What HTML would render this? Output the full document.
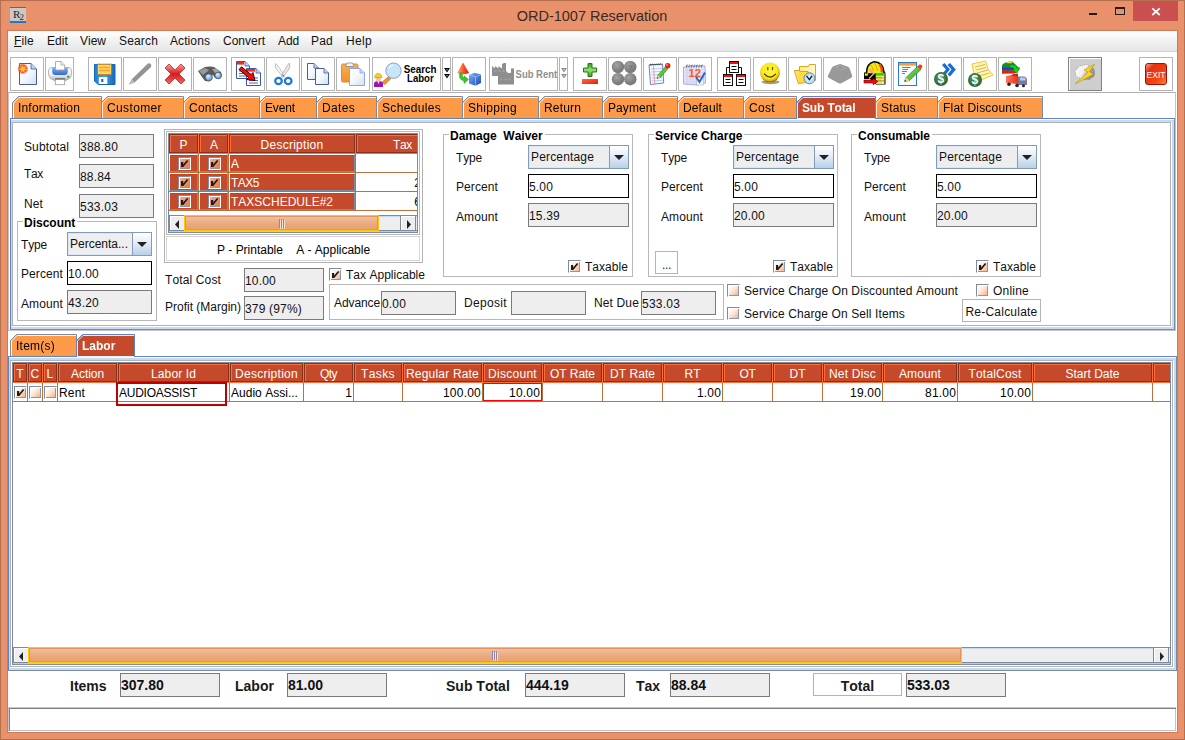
<!DOCTYPE html>
<html lang="en"><head><meta charset="utf-8"><title>ORD-1007 Reservation</title>
<style>
*{box-sizing:border-box;margin:0;padding:0}
html,body{width:1185px;height:740px;overflow:hidden}
body{background:#e8916b;font-family:"Liberation Sans",Arial,sans-serif;font-size:12px;color:#111;position:relative;letter-spacing:.15px;font-kerning:none}
.a{position:absolute}
.t{position:absolute;white-space:nowrap;line-height:14px;height:14px}
.b{font-weight:bold;letter-spacing:0}
.tf{position:absolute;border:1px solid #7a7a7a;background:#eee;white-space:nowrap;overflow:hidden;line-height:14px;padding:5px 0 0 0;height:24px}
.tfw{background:#fff;border-color:#000}
.grp{position:absolute;border:1px solid #b8b8b8}
.grp>b{letter-spacing:0;position:absolute;left:5px;top:-6px;background:#fff;padding:0 2px 0 1px;line-height:14px;height:14px;white-space:nowrap;color:#000}
.cb{position:absolute;width:13px;height:13px;border:1px solid #fff;border-top-color:#7b8ca1;border-left-color:#7b8ca1;background:linear-gradient(135deg,#fff 10%,#fde9dc 45%,#f2a87c 100%);box-shadow:inset 1px 1px 0 0 #fff,inset -1px -1px 0 0 #8a98aa}
.cbs{background:linear-gradient(135deg,#e9b0a4 10%,#ea9068 50%,#f07c2a 100%)}
.cb svg{position:absolute;left:1px;top:1px}
.combo{position:absolute;border:1px solid #7f9db9;background:#eee;line-height:14px;padding:4px 0 0 2px;white-space:nowrap;overflow:hidden;height:24px;box-shadow:inset 0 0 0 1px #dbe6f4}
.combo i{position:absolute;right:0;top:0;bottom:0;width:19px;border-left:1px solid #7f9db9;background:linear-gradient(#fff,#e4edf8 45%,#b9cfe9)}
.combo i:after{content:"";position:absolute;left:4px;top:9px;border:5px solid transparent;border-top-color:#222;border-bottom:0}
.tb{position:absolute;top:57px;height:34px;border:1px solid #b4b4b4;background:#fff}
.btn{position:absolute;border:1px solid #b4b4b4;background:#fff;text-align:center;white-space:nowrap;line-height:14px}
.th{position:absolute;height:19px;background:#c44a2b;border:1px solid #8a3219;box-shadow:inset 1px 1px 0 0 #ff6c3c;color:#fff;text-align:center;line-height:14px;padding-top:3px;white-space:nowrap;overflow:hidden}
.td{position:absolute;height:19px;line-height:14px;padding-top:3px;white-space:nowrap;overflow:hidden;color:#000}
.pane{position:absolute;background:#fff}
.pane>i{position:absolute;display:block}
</style></head>
<body>
<div class="a" style="left:0;top:0;width:1185px;height:740px;border:1px solid #b5714f"></div>
<div class="a" style="left:7px;top:30px;width:1171px;height:703px;border:1px solid #cf7a55;background:#fff"></div>
<div class="a" style="left:10px;top:7px;width:16px;height:16px;background:#c9c9c9;border-top:1px solid #2f73b8;border-bottom:2px solid #2f73b8;font-family:'Liberation Serif',serif;font-size:11px;line-height:12px;color:#222;text-align:center;letter-spacing:-1px">R<span style="font-size:9px;position:relative;top:2px">2</span></div>
<div class="t" style="left:507px;top:7px;width:170px;text-align:center;font-size:15.5px;letter-spacing:0;line-height:18px;height:18px;color:#3a2a22;transform:scaleX(.935)">ORD-1007 Reservation</div>
<div class="a" style="left:1089px;top:13px;width:8px;height:2px;background:#1e1e1e"></div>
<div class="a" style="left:1115px;top:7px;width:10px;height:8px;border:1px solid #1e1e1e;border-top-width:2px"></div>
<div class="a" style="left:1133px;top:1px;width:45px;height:20px;background:#c9504f"></div>
<svg class="a" style="left:1150px;top:6px" width="12" height="11" viewBox="0 0 12 11"><path d="M2.300 2.300 L9.700 9 M9.700 2.300 L2.300 9" stroke="#fff" stroke-width="1.700" fill="none"/></svg>
<div class="a" style="left:8px;top:31px;width:1169px;height:21px;background:linear-gradient(#fff,#f4f4f4 40%,#e6e6e6);border-bottom:1px solid #d0d0d0"></div>
<div class="t" style="left:14px;top:34px"><u>F</u>ile</div><div class="t" style="left:47px;top:34px;letter-spacing:0.08px">Edit</div><div class="t" style="left:80px;top:34px;letter-spacing:-0.00px">View</div><div class="t" style="left:119px;top:34px;letter-spacing:0.16px">Search</div><div class="t" style="left:170px;top:34px;letter-spacing:0.09px">Actions</div><div class="t" style="left:223px;top:34px;letter-spacing:-0.00px">Convert</div><div class="t" style="left:278px;top:34px;letter-spacing:-0.12px">Add</div><div class="t" style="left:311px;top:34px;letter-spacing:0.22px">Pad</div><div class="t" style="left:346px;top:34px;letter-spacing:0.33px">Help</div>
<div class="tb" style="left:10px;width:34px"></div><div class="tb" style="left:45px;width:29px"></div><div class="tb" style="left:88px;width:34px"></div><div class="tb" style="left:123px;width:34px"></div><div class="tb" style="left:158px;width:34px"></div><div class="tb" style="left:193px;width:34px"></div><div class="tb" style="left:231px;width:34px"></div><div class="tb" style="left:266px;width:34px"></div><div class="tb" style="left:301px;width:34px"></div><div class="tb" style="left:336px;width:34px"></div><div class="tb" style="left:372px;width:69px"></div><div class="tb" style="left:442px;width:9px"></div><div class="tb" style="left:452px;width:34px"></div><div class="tb" style="left:489px;width:69px"></div><div class="tb" style="left:559px;width:9px"></div><div class="tb" style="left:573px;width:34px"></div><div class="tb" style="left:608px;width:34px"></div><div class="tb" style="left:643px;width:34px"></div><div class="tb" style="left:678px;width:34px"></div><div class="tb" style="left:717px;width:34px"></div><div class="tb" style="left:753px;width:34px"></div><div class="tb" style="left:788px;width:34px"></div><div class="tb" style="left:823px;width:34px"></div><div class="tb" style="left:858px;width:34px"></div><div class="tb" style="left:893px;width:34px"></div><div class="tb" style="left:928px;width:34px"></div><div class="tb" style="left:963px;width:34px"></div><div class="tb" style="left:998px;width:34px"></div><div class="tb" style="left:1068px;width:34px;background:#cecece;border-color:#828282"></div><div class="tb" style="left:1139px;width:34px"></div>
<div class="a" style="left:8px;top:92px;width:1168px;height:239px;border:1px solid #c4c4c4;border-top-color:#b0b0b0"></div>
<div class="pane" style="left:10px;top:118px;width:1165px;height:212px"><i style="left:0;top:0;width:1165px;height:1px;background:#5f83c4"></i><i style="left:1px;top:2px;width:1163px;height:2px;background:#c5dbf3"></i><i style="left:2px;top:4px;width:1159px;height:1px;background:#b2b2b2"></i><i style="left:0;top:0;width:1px;height:212px;background:#5f83c4"></i><i style="left:1px;top:2px;width:1px;height:209px;background:#c5dbf3"></i><i style="left:2px;top:4px;width:1px;height:204px;background:#b2b2b2"></i><i style="right:0;top:0;width:1px;height:212px;background:#7b8ca1"></i><i style="right:1px;top:2px;width:2px;height:209px;background:#c5dbf3"></i><i style="right:4px;top:4px;width:1px;height:204px;background:#b2b2b2"></i><i style="left:0;bottom:0;width:1165px;height:1px;background:#7b8ca1"></i><i style="left:1px;bottom:1px;width:1163px;height:2px;background:#c5dbf3"></i><i style="left:2px;bottom:4px;width:1159px;height:1px;background:#b2b2b2"></i></div>
<svg class="a" style="left:12px;top:96px" width="90" height="22" viewBox="0 0 90 22"><path d="M0.5 22 V6.5 L6.5 0.5 H89.5 V22" fill="#fd9a47" stroke="#7b8ca1"/><path d="M1.5 22 V7 L7 1.5 H89" fill="none" stroke="#fff" stroke-opacity=".85"/></svg><div class="t" style="left:18px;top:101px;color:#000;letter-spacing:0.18px;will-change:transform">Information</div>
<svg class="a" style="left:101px;top:96px" width="83" height="22" viewBox="0 0 83 22"><path d="M0.5 22 V6.5 L6.5 0.5 H82.5 V22" fill="#fd9a47" stroke="#7b8ca1"/><path d="M1.5 22 V7 L7 1.5 H82" fill="none" stroke="#fff" stroke-opacity=".85"/></svg><div class="t" style="left:107px;top:101px;color:#000;letter-spacing:0.37px;will-change:transform">Customer</div>
<svg class="a" style="left:183px;top:96px" width="77" height="22" viewBox="0 0 77 22"><path d="M0.5 22 V6.5 L6.5 0.5 H76.5 V22" fill="#fd9a47" stroke="#7b8ca1"/><path d="M1.5 22 V7 L7 1.5 H76" fill="none" stroke="#fff" stroke-opacity=".85"/></svg><div class="t" style="left:189px;top:101px;color:#000;letter-spacing:0.21px;will-change:transform">Contacts</div>
<svg class="a" style="left:259px;top:96px" width="58" height="22" viewBox="0 0 58 22"><path d="M0.5 22 V6.5 L6.5 0.5 H57.5 V22" fill="#fd9a47" stroke="#7b8ca1"/><path d="M1.5 22 V7 L7 1.5 H57" fill="none" stroke="#fff" stroke-opacity=".85"/></svg><div class="t" style="left:265px;top:101px;color:#000;letter-spacing:-0.14px;will-change:transform">Event</div>
<svg class="a" style="left:316px;top:96px" width="61" height="22" viewBox="0 0 61 22"><path d="M0.5 22 V6.5 L6.5 0.5 H60.5 V22" fill="#fd9a47" stroke="#7b8ca1"/><path d="M1.5 22 V7 L7 1.5 H60" fill="none" stroke="#fff" stroke-opacity=".85"/></svg><div class="t" style="left:322px;top:101px;color:#000;letter-spacing:0.33px;will-change:transform">Dates</div>
<svg class="a" style="left:376px;top:96px" width="87" height="22" viewBox="0 0 87 22"><path d="M0.5 22 V6.5 L6.5 0.5 H86.5 V22" fill="#fd9a47" stroke="#7b8ca1"/><path d="M1.5 22 V7 L7 1.5 H86" fill="none" stroke="#fff" stroke-opacity=".85"/></svg><div class="t" style="left:382px;top:101px;color:#000;letter-spacing:0.33px;will-change:transform">Schedules</div>
<svg class="a" style="left:462px;top:96px" width="77" height="22" viewBox="0 0 77 22"><path d="M0.5 22 V6.5 L6.5 0.5 H76.5 V22" fill="#fd9a47" stroke="#7b8ca1"/><path d="M1.5 22 V7 L7 1.5 H76" fill="none" stroke="#fff" stroke-opacity=".85"/></svg><div class="t" style="left:468px;top:101px;color:#000;letter-spacing:0.29px;will-change:transform">Shipping</div>
<svg class="a" style="left:538px;top:96px" width="65" height="22" viewBox="0 0 65 22"><path d="M0.5 22 V6.5 L6.5 0.5 H64.5 V22" fill="#fd9a47" stroke="#7b8ca1"/><path d="M1.5 22 V7 L7 1.5 H64" fill="none" stroke="#fff" stroke-opacity=".85"/></svg><div class="t" style="left:544px;top:101px;color:#000;letter-spacing:0.16px;will-change:transform">Return</div>
<svg class="a" style="left:602px;top:96px" width="76" height="22" viewBox="0 0 76 22"><path d="M0.5 22 V6.5 L6.5 0.5 H75.5 V22" fill="#fd9a47" stroke="#7b8ca1"/><path d="M1.5 22 V7 L7 1.5 H75" fill="none" stroke="#fff" stroke-opacity=".85"/></svg><div class="t" style="left:608px;top:101px;color:#000;letter-spacing:0.09px;will-change:transform">Payment</div>
<svg class="a" style="left:677px;top:96px" width="67" height="22" viewBox="0 0 67 22"><path d="M0.5 22 V6.5 L6.5 0.5 H66.5 V22" fill="#fd9a47" stroke="#7b8ca1"/><path d="M1.5 22 V7 L7 1.5 H66" fill="none" stroke="#fff" stroke-opacity=".85"/></svg><div class="t" style="left:683px;top:101px;color:#000;letter-spacing:0.14px;will-change:transform">Default</div>
<svg class="a" style="left:743px;top:96px" width="54" height="22" viewBox="0 0 54 22"><path d="M0.5 22 V6.5 L6.5 0.5 H53.5 V22" fill="#fd9a47" stroke="#7b8ca1"/><path d="M1.5 22 V7 L7 1.5 H53" fill="none" stroke="#fff" stroke-opacity=".85"/></svg><div class="t" style="left:749px;top:101px;color:#000;letter-spacing:0.33px;will-change:transform">Cost</div>
<svg class="a" style="left:875px;top:96px" width="63" height="22" viewBox="0 0 63 22"><path d="M0.5 22 V6.5 L6.5 0.5 H62.5 V22" fill="#fd9a47" stroke="#7b8ca1"/><path d="M1.5 22 V7 L7 1.5 H62" fill="none" stroke="#fff" stroke-opacity=".85"/></svg><div class="t" style="left:881px;top:101px;color:#000;letter-spacing:0.16px;will-change:transform">Status</div>
<svg class="a" style="left:937px;top:96px" width="106" height="22" viewBox="0 0 106 22"><path d="M0.5 22 V6.5 L6.5 0.5 H105.5 V22" fill="#fd9a47" stroke="#7b8ca1"/><path d="M1.5 22 V7 L7 1.5 H105" fill="none" stroke="#fff" stroke-opacity=".85"/></svg><div class="t" style="left:943px;top:101px;color:#000;letter-spacing:0.21px;will-change:transform">Flat Discounts</div>
<svg class="a" style="left:796px;top:96px" width="80" height="22" viewBox="0 0 80 22"><path d="M0.5 22 V6.5 L6.5 0.5 H79.5 V22" fill="#c54a2b" stroke="#5f83c4"/><path d="M1.5 22 V7 L7 1.5 H79" fill="none" stroke="#fff" stroke-opacity=".85"/></svg><div class="a" style="left:797px;top:118px;width:78px;height:1px;background:#e4effb"></div><div class="t" style="left:802px;top:101px;color:#fff;font-weight:bold;letter-spacing:-0.15px;will-change:transform">Sub Total</div>
<svg width="0" height="0" style="position:absolute"><defs>
<linearGradient id="gPage" x1="0" y1="0" x2="1" y2="1"><stop offset="0" stop-color="#fff"/><stop offset=".5" stop-color="#f4f8fd"/><stop offset="1" stop-color="#cfe0f3"/></linearGradient>
<radialGradient id="gStar"><stop offset="0" stop-color="#ffc21a"/><stop offset=".3" stop-color="#ff5a1e"/><stop offset=".7" stop-color="#ff4a1e" stop-opacity=".9"/><stop offset="1" stop-color="#ff4a1e" stop-opacity="0"/></radialGradient>
<linearGradient id="gPrn" x1="0" y1="0" x2="0" y2="1"><stop offset="0" stop-color="#fff"/><stop offset=".55" stop-color="#ececec"/><stop offset="1" stop-color="#a8a8a8"/></linearGradient>
<linearGradient id="gPrnB" x1="0" y1="0" x2="0" y2="1"><stop offset="0" stop-color="#7ab8ff"/><stop offset="1" stop-color="#2a68e0"/></linearGradient>
<linearGradient id="gBlue" x1="0" y1="0" x2="1" y2="0"><stop offset="0" stop-color="#1f7fd1"/><stop offset=".5" stop-color="#3aa0ea"/><stop offset="1" stop-color="#1668b8"/></linearGradient>
<linearGradient id="gRedX" x1="0" y1="0" x2="0" y2="1"><stop offset="0" stop-color="#f7a1a1"/><stop offset=".5" stop-color="#d81a1a"/><stop offset="1" stop-color="#ef6a6a"/></linearGradient>
<linearGradient id="gGray" x1="0" y1="0" x2="1" y2="1"><stop offset="0" stop-color="#a9a9a9"/><stop offset="1" stop-color="#7f7f7f"/></linearGradient>
<radialGradient id="gLens" cx=".4" cy=".35"><stop offset="0" stop-color="#e6f2ff"/><stop offset="1" stop-color="#6ea6e6"/></radialGradient>
<linearGradient id="gOr" x1="0" y1="0" x2="0" y2="1"><stop offset="0" stop-color="#f8b050"/><stop offset="1" stop-color="#f09030"/></linearGradient>
<linearGradient id="gGreen" x1="0" y1="0" x2="0" y2="1"><stop offset="0" stop-color="#2f9a1c"/><stop offset=".5" stop-color="#9bdc7a"/><stop offset="1" stop-color="#2f9a1c"/></linearGradient>
<linearGradient id="gRedM" x1="0" y1="0" x2="1" y2="1"><stop offset="0" stop-color="#ff6a3a"/><stop offset="1" stop-color="#e8200a"/></linearGradient>
<radialGradient id="gBall" cx=".4" cy=".35"><stop offset="0" stop-color="#a4a4a4"/><stop offset="1" stop-color="#7c7c7c"/></radialGradient>
<radialGradient id="gSmile" cx=".48" cy=".42" r=".56"><stop offset="0" stop-color="#fff43a"/><stop offset=".7" stop-color="#fbe820"/><stop offset=".9" stop-color="#d8b80a"/><stop offset="1" stop-color="#8a6a00"/></radialGradient>
<radialGradient id="gDollar" cx=".45" cy=".4"><stop offset="0" stop-color="#5c9a5c"/><stop offset="1" stop-color="#2f6a34"/></radialGradient>
<linearGradient id="gExit" x1="0" y1="0" x2="1" y2="1"><stop offset="0" stop-color="#f4b0a0"/><stop offset=".25" stop-color="#e8300c"/><stop offset=".7" stop-color="#f24a12"/><stop offset="1" stop-color="#ff8a30"/></linearGradient>
<linearGradient id="gFold" x1="0" y1="1" x2="1" y2="0"><stop offset="0" stop-color="#ffe24a"/><stop offset=".6" stop-color="#fff4a8"/><stop offset="1" stop-color="#fffdf0"/></linearGradient>
<linearGradient id="gFold2" x1="0" y1="0" x2="1" y2="0"><stop offset="0" stop-color="#fff0a0"/><stop offset=".35" stop-color="#ffd83a"/><stop offset="1" stop-color="#ffe870"/></linearGradient>
<radialGradient id="gClock"><stop offset="0" stop-color="#e8fbff"/><stop offset="1" stop-color="#a8dcf8"/></radialGradient>
<linearGradient id="gCone" x1="0" y1="0" x2="1" y2="0"><stop offset="0" stop-color="#ffb08a"/><stop offset=".5" stop-color="#ff5a2a"/><stop offset="1" stop-color="#d81a0a"/></linearGradient>
<linearGradient id="gCube" x1="0" y1="0" x2="1" y2="1"><stop offset="0" stop-color="#7ab0f4"/><stop offset="1" stop-color="#1a48b8"/></linearGradient>
<linearGradient id="gPencil" x1="0" y1="0" x2="1" y2="1"><stop offset="0" stop-color="#9be86a"/><stop offset="1" stop-color="#2a9a1a"/></linearGradient>
<linearGradient id="gCloud" x1="0" y1=".2" x2="1" y2=".7"><stop offset="0" stop-color="#fff"/><stop offset=".45" stop-color="#f0f0f0"/><stop offset=".7" stop-color="#a0a0a0"/><stop offset="1" stop-color="#8a8a8a"/></linearGradient>
<linearGradient id="gTruck" x1="0" y1="0" x2="1" y2="0"><stop offset="0" stop-color="#ff7a5a"/><stop offset="1" stop-color="#e8301a"/></linearGradient>
</defs></svg>
<svg class="a" style="left:10px;top:57px" width="34" height="34" viewBox="0 0 34 34"><path d="M9.5 6.5 H21 L26.5 12 V27.5 H9.5Z" fill="url(#gPage)" stroke="#4a5c9c"/><path d="M21 6.5 V12 H26.5" fill="#b9d8f4" stroke="#4a5c9c" stroke-width=".8"/><circle cx="12.800" cy="11.800" r="5.600" fill="url(#gStar)"/><path d="M12.800 7.500 L13.400 10.600 L16.500 9 L14.300 11.600 L17.200 12.800 L14 13.200 L14.800 16.300 L12.800 13.800 L10.500 16 L11.500 13 L8.300 12.300 L11.500 11.300 L9.600 8.600 L12.300 10.500Z" fill="#ffe24a" fill-opacity=".9"/><circle cx="12.800" cy="11.900" r="1.700" fill="#ffcf10"/></svg>
<svg class="a" style="left:45px;top:57px" width="29" height="34" viewBox="0 0 29 34"><path d="M3.500 14 Q3.500 10.500 7 10.500 H23 Q26.600 10.500 26.600 14 V17 Q26.600 21 22 23 Q15 26 8 23 Q3.500 21 3.500 17Z" fill="url(#gPrn)" stroke="#a4a4a4" stroke-width=".8"/><path d="M7.200 10.300 H22.800 V14.500 Q22.800 18 19.500 18 H10.500 Q7.200 18 7.200 14.500Z" fill="url(#gPrnB)"/><rect x="9.800" y="12" width="10.500" height="2" fill="#80849a"/><path d="M10.500 13 V4.500 H16 L19.700 8 V13Z" fill="#fff" stroke="#a6a6a6" stroke-width=".9"/><path d="M16 4.500 V8 H19.700" fill="#f0f0f0" stroke="#a6a6a6" stroke-width=".8"/><rect x="10.300" y="21.400" width="9.400" height="6.300" fill="#fff" stroke="#9a9a9a" stroke-width=".8"/><rect x="10.300" y="21.400" width="9.400" height="1.200" fill="#5a5a5a"/><circle cx="23.200" cy="19.600" r="1.200" fill="#2aa82a"/></svg>
<svg class="a" style="left:88px;top:57px" width="34" height="34" viewBox="0 0 34 34"><path d="M6.5 7.5 H27 V27.5 H10 L6.5 24Z" fill="url(#gBlue)" stroke="#1766b6"/><rect x="9.500" y="7.200" width="14" height="10.5" fill="#ffd56a" stroke="#b87a2a"/><path d="M11 10.500 H22 M11 13.500 H22" stroke="#f8a51a" stroke-width="1.500"/><rect x="10.800" y="20" width="8.5" height="7" fill="#fbfdff"/><rect x="13.300" y="22" width="2" height="3" fill="#1a5ec0"/></svg>
<svg class="a" style="left:123px;top:57px" width="34" height="34" viewBox="0 0 34 34"><path d="M6 27.500 L9 22 L24.500 6.800 Q26.800 5.600 28 7.600 Q28.800 9.200 27.500 10.500 L11.500 25.500Z" fill="url(#gGray)"/><path d="M6 27.500 L9 22 L11.500 25.500Z" fill="#bdbdbd"/></svg>
<svg class="a" style="left:158px;top:57px" width="34" height="34" viewBox="0 0 34 34"><path d="M7 11 L11 7 L17 13 L23 7 L27 11 L21 17 L27 23 L23 27 L17 21 L11 27 L7 23 L13 17Z" fill="url(#gRedX)" stroke="#c81e1e" stroke-width=".8" stroke-linejoin="round"/></svg>
<svg class="a" style="left:193px;top:57px" width="34" height="34" viewBox="0 0 34 34"><path d="M5 14 L12 10 L17 9.500 L21 10 L28 15 L29 19 L26 22 L22 21 L20 18 L18 19 L19 22 L16 24.500 L12 24 L9 20Z" fill="#5a5a5a"/><path d="M6 14 L12 11 L16 13 L10 18Z" fill="#9a9a9a"/><path d="M19 12 L23 11.500 L27 15 L22 16Z" fill="#a4a4a4"/><circle cx="15.800" cy="20.300" r="3.600" fill="url(#gLens)" stroke="#4a4a4a" stroke-width=".7"/><circle cx="25.200" cy="18.500" r="3.300" fill="url(#gLens)" stroke="#4a4a4a" stroke-width=".7"/></svg>
<svg class="a" style="left:231px;top:57px" width="34" height="34" viewBox="0 0 34 34"><path d="M5.5 4.5 H14 L18.5 9 V21.5 H5.5Z" fill="#fff" stroke="#3a56a8"/><path d="M14 4.5 V9 H18.5" fill="#b9d8f4" stroke="#3a56a8" stroke-width=".8"/><rect x="6" y="5" width="7" height="2.6" fill="#ff2a0a"/><path d="M8 14 H16 M8 16.5 H16 M8 19 H16" stroke="#3a56a8" stroke-width=".9"/><path d="M15.5 11.5 H25 L29.5 16 V28.5 H15.5Z" fill="#fff" stroke="#3a56a8"/><path d="M25 11.5 V16 H29.5" fill="#b9d8f4" stroke="#3a56a8" stroke-width=".8"/><rect x="16" y="12" width="8" height="2.6" fill="#ff2a0a"/><path d="M18 21 H27 M18 23.5 H27 M18 26 H27" stroke="#3a56a8" stroke-width=".9"/><path d="M8 12.500 L10.500 9.800 L20 17.500 L22 15.500 L24 23.500 L15.500 22.500 L17.500 20.500Z" fill="#f00a0a" stroke="#1a0000" stroke-width=".9" stroke-linejoin="round"/></svg>
<svg class="a" style="left:266px;top:57px" width="34" height="34" viewBox="0 0 34 34"><path d="M9.500 6.500 Q8.500 10 11 13 L17.500 20.500 L19 19 L12 9Z" fill="#f4f4f4" stroke="#b8b8b8" stroke-width=".8"/><path d="M23.300 6 Q24.800 10 22.500 13 L16.500 20.500 L15 19 L21 9Z" fill="#e6e6e6" stroke="#b0b0b0" stroke-width=".8"/><circle cx="17" cy="18.500" r="1" fill="#8a8a8a"/><ellipse cx="12.500" cy="24" rx="3.300" ry="3.100" fill="none" stroke="#1f78dc" stroke-width="2.200"/><ellipse cx="22.200" cy="24" rx="3.300" ry="3.100" fill="none" stroke="#1f78dc" stroke-width="2.200"/></svg>
<svg class="a" style="left:301px;top:57px" width="34" height="34" viewBox="0 0 34 34"><path d="M6.5 6.5 H13 L17.5 11 V22.5 H6.5Z" fill="url(#gPage)" stroke="#4a5c9c"/><path d="M13 6.5 V11 H17.5" fill="#b9d8f4" stroke="#4a5c9c" stroke-width=".8"/><path d="M14.5 11.5 H23 L27.5 16 V27.5 H14.5Z" fill="url(#gPage)" stroke="#4a5c9c"/><path d="M23 11.5 V16 H27.5" fill="#b9d8f4" stroke="#4a5c9c" stroke-width=".8"/></svg>
<svg class="a" style="left:336px;top:57px" width="34" height="34" viewBox="0 0 34 34"><rect x="5.500" y="7" width="16.500" height="18" rx="1.500" fill="url(#gOr)" stroke="#d88a3a"/><path d="M9.500 9.500 L11 6 H16.500 L18 9.500Z" fill="#f4f4f4" stroke="#8a8a8a" stroke-width=".8"/><path d="M13.5 11.5 H24 L28.5 16 V28.5 H13.5Z" fill="url(#gPage)" stroke="#8fa6e2"/><path d="M24 11.5 V16 H28.5" fill="#b9d8f4" stroke="#8fa6e2" stroke-width=".8"/></svg>
<svg class="a" style="left:372px;top:57px" width="69" height="34" viewBox="0 0 69 34"><path d="M16.300 19.800 L18.800 21.800 L12.800 27.600 L10 25.200Z" fill="#f0902a" stroke="#b86a1a" stroke-width=".6"/><path d="M15.800 18.300 L17.800 20.300 L19.300 18.800 L17.300 17.300Z" fill="#5a5a5a"/><circle cx="21.500" cy="13.700" r="7.700" fill="#c4e6f6" stroke="#8a8ee0" stroke-width=".9"/><path d="M17 11 Q19 8 22 8" fill="none" stroke="#fff" stroke-width="1.200" stroke-opacity=".8"/><path d="M2 30 V27 Q2 24.300 5 24.300 H8 Q11 24.300 11 27 V30Z" fill="#a012b4"/><path d="M5.500 24.300 L6.500 27 L7.500 24.300Z" fill="#fff"/><ellipse cx="6.300" cy="21.900" rx="2.700" ry="2.500" fill="#f4c8a0"/><path d="M2.500 20.600 Q3 16.500 6.300 16.500 Q9.500 16.500 10 20.600Z" fill="#f2d21a" stroke="#a88a00" stroke-width=".5"/><text x="31.700" y="16" font-family="Liberation Sans,Arial,sans-serif" font-weight="bold" font-size="11" letter-spacing="0" fill="#000" textLength="32.800" lengthAdjust="spacingAndGlyphs">Search</text><text x="35.100" y="24.900" font-family="Liberation Sans,Arial,sans-serif" font-weight="bold" font-size="11" letter-spacing="0" fill="#000" textLength="26.600" lengthAdjust="spacingAndGlyphs">Labor</text></svg>
<svg class="a" style="left:442px;top:57px" width="9" height="34" viewBox="0 0 9 34"><path d="M2 11 H8 L5 15.500Z" fill="#000"/><path d="M2 17 H8 L5 21.500Z" fill="#000"/><path d="M4 12.300 H6 L5 13.800Z" fill="#fff" fill-opacity=".7"/><path d="M4 18.300 H6 L5 19.800Z" fill="#fff" fill-opacity=".7"/></svg>
<svg class="a" style="left:452px;top:57px" width="34" height="34" viewBox="0 0 34 34"><path d="M11 5.500 L17 16 Q11 18.500 5 16Z" fill="url(#gCone)"/><path d="M8 15.500 Q5.500 22 12 24 V26.500 L16.500 22.500 L12 18.800 V21 Q9.500 20 10.500 16Z" fill="#3ac42a" stroke="#2a9a1a" stroke-width=".5"/><path d="M17 18 L22.500 15.800 L29 17.500 V26 L23.500 28.800 L17 26.500Z" fill="url(#gCube)"/><path d="M17 18 L23.500 20 L29 17.500 M23.500 20 V28.800" fill="none" stroke="#a8c8f8" stroke-width=".7"/></svg>
<svg class="a" style="left:489px;top:57px" width="69" height="34" viewBox="0 0 69 34"><path d="M3 9 L6 11.500 V9 L9.500 11.500 V9 L13 11.500 V7 L15 6 H17 V14 L19 16 H22 V11.500 H25 V27.500 H9 V19 H3Z" fill="#8e8e8e"/><path d="M5.500 14 H7.500 M9.500 14 H11.500 M13.500 14 H15.500 M11.500 22.500 H13.500 M15.500 22.500 H17.500 M19.500 22.500 H21.500" stroke="#a8a8a8" stroke-width="1.500"/><text x="26.600" y="20.800" font-family="Liberation Sans,Arial,sans-serif" font-weight="bold" font-size="10.500" letter-spacing="0" fill="#8e8e8e" textLength="41.500" lengthAdjust="spacingAndGlyphs">Sub Rent</text></svg>
<svg class="a" style="left:559px;top:57px" width="9" height="34" viewBox="0 0 9 34"><path d="M2 11 H8 L5 15.500Z" fill="#8e8e8e"/><path d="M2 17 H8 L5 21.500Z" fill="#8e8e8e"/><path d="M4 12.300 H6 L5 13.800Z" fill="#fff" fill-opacity=".7"/><path d="M4 18.300 H6 L5 19.800Z" fill="#fff" fill-opacity=".7"/></svg>
<svg class="a" style="left:573px;top:57px" width="34" height="34" viewBox="0 0 34 34"><path d="M15 6.500 H19 V11 H23.500 V15 H19 V19.500 H15 V15 H10.500 V11 H15Z" fill="url(#gGreen)" stroke="#1f7f12" stroke-width="1"/><rect x="9" y="22" width="16" height="5" fill="url(#gRedM)"/></svg>
<svg class="a" style="left:608px;top:57px" width="34" height="34" viewBox="0 0 34 34"><circle cx="10" cy="10" r="6.200" fill="url(#gBall)"/><circle cx="22.300" cy="10" r="6.200" fill="url(#gBall)"/><circle cx="10" cy="22.200" r="6.200" fill="url(#gBall)"/><circle cx="22.300" cy="22.200" r="6.200" fill="url(#gBall)"/><text x="22.300" y="13.500" text-anchor="middle" font-family="Liberation Sans,Arial,sans-serif" font-weight="bold" font-size="9" fill="#777">?</text></svg>
<svg class="a" style="left:643px;top:57px" width="34" height="34" viewBox="0 0 34 34"><path d="M6 8 L19.500 7 L20.700 26 L7.500 27.500Z" fill="#f4f8ff" stroke="#7a7ad0"/><path d="M8 12 L19 11.300 M8.200 15 L19.200 14.300 M8.400 18 L19.400 17.300 M8.600 21 L19.600 20.300 M8.800 24 L19.800 23.300" stroke="#a8cdf4" stroke-width=".9"/><path d="M10.500 9 L11.700 26.500" stroke="#f48a7a" stroke-width=".8"/><path d="M7 8.500 Q7 6 8.500 8 Q9 6 10.500 8 Q11 6 12.500 8 Q13 6 14.500 8 Q15 6 16.500 7.800 Q17 6 18.500 7.800" fill="none" stroke="#3a3a3a" stroke-width="1"/><path d="M14 21.500 L15 18 L22.500 9.500 L25 11.500 L17.500 20.500Z" fill="url(#gPencil)" stroke="#1f7f12" stroke-width=".6"/><path d="M14 21.500 L15 18 L17.500 20.500Z" fill="#e8c89a"/><path d="M14 21.500 L14.400 20.200 L15.300 21Z" fill="#222"/><circle cx="24.700" cy="8.800" r="2.700" fill="#e8200a"/><circle cx="24" cy="8" r="1" fill="#ff8a6a"/></svg>
<svg class="a" style="left:678px;top:57px" width="34" height="34" viewBox="0 0 34 34"><path d="M5.500 10 L27 9 L27.500 26 L19 28 L5.500 27Z" fill="#e4e4fb" stroke="#9a9ad0" stroke-width=".8"/><path d="M7 13 H26 M7 16 H26 M7 19 H26 M7 22 H26 M7 25 H20 M9 11 V27 M12 11 V27 M15 11 V27 M18 11 V27" stroke="#c8c8f0" stroke-width=".6"/><path d="M8.500 10.500 Q8 7 10 8.500 M11 10.500 Q10.500 7 12.500 8.500 M13.500 10.500 Q13 7 15 8.500 M16 10.500 Q15.500 7 17.500 8.500 M18.500 10.500 Q18 7 20 8.500 M21 10.500 Q20.500 7 22.500 8.500 M23.500 10.500 Q23 7 25 8.500" fill="none" stroke="#6a6a6a" stroke-width="1"/><text x="10.500" y="19.800" font-family="Liberation Sans,Arial,sans-serif" font-weight="bold" font-size="10.500" letter-spacing="0" fill="#ff5a0a" textLength="12.600" lengthAdjust="spacingAndGlyphs">12</text><rect x="18.500" y="20.500" width="7" height="7.500" fill="#f4f4f4" stroke="#b0b0b0" stroke-width=".6"/><path d="M18 20 L21.500 25 L27 15.500" fill="none" stroke="#1a6ad8" stroke-width="2"/></svg>
<svg class="a" style="left:717px;top:57px" width="34" height="34" viewBox="0 0 34 34"><path d="M12.500 10.500 H9.500 V17.500 M22 10.500 H24.500 V17.500" fill="none" stroke="#111" stroke-width="1"/><rect x="12.5" y="4.5" width="9" height="11" fill="#fff" stroke="#111" stroke-width="1"/><rect x="13" y="5" width="8" height="2" fill="#ff0a0a"/><path d="M14.5 9.5 H19.5 M14.5 12.5 H19.5" stroke="#111" stroke-width="1"/><rect x="6.5" y="17.5" width="9" height="11" fill="#fff" stroke="#111" stroke-width="1"/><rect x="7" y="18" width="8" height="2" fill="#ff0a0a"/><path d="M8.5 22.5 H13.5 M8.5 25.5 H13.5" stroke="#111" stroke-width="1"/><rect x="19.5" y="17.5" width="9" height="11" fill="#fff" stroke="#111" stroke-width="1"/><rect x="20" y="18" width="8" height="2" fill="#ff0a0a"/><path d="M21.5 22.5 H26.5 M21.5 25.5 H26.5" stroke="#111" stroke-width="1"/></svg>
<svg class="a" style="left:753px;top:57px" width="34" height="34" viewBox="0 0 34 34"><ellipse cx="17.500" cy="25" rx="9" ry="2.200" fill="#6a4a00" fill-opacity=".55"/><circle cx="17" cy="15.400" r="9.900" fill="url(#gSmile)"/><path d="M14.800 10 V13.200 M19.500 10 V13.200" stroke="#5a5a10" stroke-width="1.200"/><path d="M11 16.600 Q17 23.400 22.900 16.900" fill="none" stroke="#3a2a00" stroke-width="1.100"/></svg>
<svg class="a" style="left:788px;top:57px" width="34" height="34" viewBox="0 0 34 34"><path d="M11.500 9.500 H20.500 L21.200 7.500 H27.500 V23.500 H11.500Z" fill="url(#gFold)" stroke="#e09a10" stroke-width=".9"/><path d="M6.300 13.500 H11.300 L13 14.500 H20 L22 25 L10.300 26.600Z" fill="url(#gFold2)" stroke="#e09a10" stroke-width=".9"/><path d="M11.500 10 V14" stroke="#e09a10" stroke-width=".9"/><circle cx="21.400" cy="21.300" r="5.500" fill="url(#gClock)" stroke="#7a7e9c" stroke-width="1"/><path d="M18.500 18.800 L21.400 22.600 L24 18.800" fill="none" stroke="#1a1a1a" stroke-width="1.300"/></svg>
<svg class="a" style="left:823px;top:57px" width="34" height="34" viewBox="0 0 34 34"><path d="M8.900 10.700 Q9.500 9.500 11 9 L16.100 7.200 Q17 7 18 7.300 L25 9.800 Q26.300 10.300 26.600 11.500 L29.200 18.800 Q29.500 20 28.300 20.800 L18.300 26.200 Q17 26.900 15.700 26.200 L5.600 20.800 Q4.500 20 4.800 19.100Z" fill="#999"/><path d="M10.500 10.800 L16.500 8.300 L25 11 L18.500 13.800Z" fill="#a3a3a3"/><path d="M15 11.800 L17.500 9.500 L19.500 12.300 M16 11 L18.700 11.300" fill="none" stroke="#8c8c8c" stroke-width=".8"/></svg>
<svg class="a" style="left:858px;top:57px" width="34" height="34" viewBox="0 0 34 34"><path d="M6 15.500 H27.500 V27.500 H18 L12 22 H6Z" fill="#000"/><path d="M8.500 16 Q8.500 6.500 16 4.800 Q25 5 26 15 L26 17 H8.500Z" fill="#f6e41a" stroke="#000" stroke-width="1.600"/><path d="M16 5.500 Q19 9 19.500 14 M12 7.500 Q15 10 15.500 14" fill="none" stroke="#c8a800" stroke-width=".9"/><path d="M21.500 7 Q24.300 10.500 24 15.500" stroke="#e8501a" stroke-width="2.400" fill="none"/><path d="M11.500 11.500 Q12.500 14.500 16 16.500 L11 21.500" fill="none" stroke="#f0a090" stroke-width="1.500"/><path d="M6.800 16.500 H10.500 L9.500 18.800 H6.800Z" fill="#f6e41a"/><rect x="17.800" y="16" width="8.700" height="11" fill="#f4dc5a"/><rect x="17.800" y="16" width="8.700" height="2.600" fill="#0ae00a"/><path d="M17.800 20.800 H26.500 M17.800 23.800 H26.500" stroke="#8a7a1a" stroke-width=".8"/><path d="M24 19.500 H25.500 V20.500 H24Z M24 22.300 H25.500 V23.300 H24Z M24 25.200 H25.500 V26.200 H24Z" fill="#fff"/><path d="M6 23 H15 V21.300 L20 24.500 L15 27.700 V26 H6Z" fill="#f00a0a" stroke="#7a0000" stroke-width=".6"/></svg>
<svg class="a" style="left:893px;top:57px" width="34" height="34" viewBox="0 0 34 34"><rect x="5.500" y="5.500" width="18" height="23" fill="#f8fbff" stroke="#2a7ad0" stroke-width="1"/><rect x="6" y="6" width="17" height="2.600" fill="#ff9a2a"/><path d="M9 10.500 H17.500 M9.500 12.500 H15 M9 14.500 H14 M9 16.500 H12" stroke="#2a7ad0" stroke-width=".9"/><path d="M11.500 24.500 L13 20.500 L24.500 9.500 L28 12.500 L16.500 23.500Z" fill="url(#gPencil)" stroke="#1f7f12" stroke-width=".6"/><path d="M11.500 24.500 L13 20.500 L16.500 23.500Z" fill="#f4d87a"/><path d="M11.500 24.500 L12.100 22.900 L13.300 24Z" fill="#111"/><path d="M24.500 9.500 L26.500 7.500 Q28.500 7 29.500 9 L28 12.500Z" fill="#f03a1a"/></svg>
<svg class="a" style="left:928px;top:57px" width="34" height="34" viewBox="0 0 34 34"><path d="M14 8 L16.500 6 L22 12.500 L16.500 19 L14 17 L18 12.500Z" fill="#1a6ad8"/><path d="M19.500 8 L22 6 L27.800 12.500 L22 19.500 L19.500 17.500 L23.500 12.500Z" fill="#1a6ad8"/><circle cx="13" cy="22" r="7" fill="url(#gDollar)"/><text x="13" y="26.3" text-anchor="middle" font-family="Liberation Sans,Arial,sans-serif" font-weight="bold" font-size="12" fill="#fff">$</text></svg>
<svg class="a" style="left:963px;top:57px" width="34" height="34" viewBox="0 0 34 34"><path d="M9 7 L22.500 4 L25 12 L30 18 L18 23 L12 21.500Z" fill="#fff6b4" stroke="#f4c01a" stroke-width=".9"/><path d="M12 10 L22 7.500 M12.800 13 L23 10.500 M14 16 L25 13 M16 19 L26.500 16" stroke="#d8b45a" stroke-width="1"/><circle cx="12" cy="23" r="7" fill="url(#gDollar)"/><text x="12" y="27.3" text-anchor="middle" font-family="Liberation Sans,Arial,sans-serif" font-weight="bold" font-size="12" fill="#fff">$</text></svg>
<svg class="a" style="left:998px;top:57px" width="34" height="34" viewBox="0 0 34 34"><path d="M4 8 Q8 4 14 4.500 L17 7 L22 12 L18 16 L4 16.500Z" fill="#1a8a2a"/><path d="M4 10.500 H17 V13 H4Z" fill="#2a3ad0"/><path d="M4 13.500 H17 V16.500 H4Z" fill="#e81a1a"/><path d="M9 5.500 H14" stroke="#f4e04a" stroke-width="1.500"/><path d="M12 8 Q18 7 19 11 L21.500 10.500 L19 16 L14 13 L16.500 12.500 Q16 10 12 10.500Z" fill="#1ad01a" stroke="#0a7a0a" stroke-width=".5"/><path d="M8 19 L20 17 V27 L8 26Z" fill="url(#gTruck)"/><path d="M14 17.500 L20 16.500 V19 H14Z" fill="#d81a0a"/><path d="M20 19.500 H26.500 Q29 20 29 23 V28 H20Z" fill="#7a7a9a"/><rect x="22" y="20.500" width="5.500" height="3" fill="#a8d0f8"/><circle cx="11" cy="27.300" r="1.800" fill="#222"/><circle cx="19" cy="28.500" r="1.800" fill="#222"/><circle cx="25.500" cy="28.800" r="1.500" fill="#222"/></svg>
<svg class="a" style="left:1068px;top:57px" width="34" height="34" viewBox="0 0 34 34"><path d="M1.500 33 V1.500 H33" fill="none" stroke="#fff" stroke-width="1"/><path d="M7.300 16.500 Q6.300 13 9.500 12 Q10.500 8.300 14.500 8.800 Q17.500 6.300 20.500 8.500 L24 10 Q27 12 26.500 15.500 Q27.500 19 24 20.500 Q22 23.500 18.500 22.300 Q15 23.800 12.500 21 Q8 21 7.300 16.500Z" fill="url(#gCloud)" stroke="#6a6a6a" stroke-width=".5" stroke-dasharray="1 1"/><path d="M26.700 7.100 L15.900 13 L20.100 15 L7.100 27 L25.300 17.300 L21.300 14.500Z" fill="#ffd21e" stroke="#b08a00" stroke-width=".5" stroke-linejoin="round"/></svg>
<svg class="a" style="left:1139px;top:57px" width="34" height="34" viewBox="0 0 34 34"><rect x="6.500" y="6.500" width="21" height="21" rx="2.500" fill="url(#gExit)" stroke="#a01212" stroke-width="1"/><text x="7.600" y="21" font-family="Liberation Sans,Arial,sans-serif" font-size="9.600" letter-spacing="0" fill="#fff" textLength="19" lengthAdjust="spacingAndGlyphs">EXIT</text></svg>
<div class="t" style="left:24px;top:140px;letter-spacing:0.12px">Subtotal</div><div class="tf" style="left:79px;top:134px;width:75px;letter-spacing:0.22px">388.80</div>
<div class="t" style="left:24px;top:167px;letter-spacing:-0.33px">Tax</div><div class="tf" style="left:79px;top:164px;width:75px;letter-spacing:0.19px">88.84</div>
<div class="t" style="left:24px;top:197px;letter-spacing:0.11px">Net</div><div class="tf" style="left:79px;top:194px;width:75px;letter-spacing:0.22px">533.03</div>
<div class="grp" style="left:17px;top:221px;width:140px;height:100px"><b>Discount</b></div>
<div class="t" style="left:21px;top:238px;letter-spacing:-0.17px">Type</div><div class="combo" style="left:67px;top:232px;width:85px;letter-spacing:-0.00px">Percenta...<i></i></div>
<div class="t" style="left:21px;top:267px;letter-spacing:0.09px">Percent</div><div class="tf tfw" style="left:67px;top:261px;width:85px;letter-spacing:0.19px">10.00</div>
<div class="t" style="left:21px;top:297px;letter-spacing:0.11px">Amount</div><div class="tf" style="left:67px;top:290px;width:85px;letter-spacing:0.19px">43.20</div>
<div class="a" style="left:164px;top:129px;width:259px;height:134px;border:1px solid #b2b2b2"></div>
<div class="a" style="left:166px;top:131px;width:254px;height:104px;border:1px solid #b8b8b8"></div>
<div class="a" style="left:168px;top:133px;width:250px;height:100px;border:1px solid #7b8ca1;background:#fff;overflow:hidden"><div class="a" style="left:0;top:0;width:248px;height:20px;background:#ff6c3c"></div><div class="th" style="left:0px;top:0;width:29px">P</div><div class="th" style="left:30px;top:0;width:29px;padding-left:1px">A</div><div class="th" style="left:60px;top:0;width:126px;letter-spacing:0.27px">Description</div><div class="th" style="left:187px;top:0;width:73px;text-align:right;padding-right:16px;letter-spacing:-0.33px">Tax</div><div class="a" style="left:0;top:38px;width:248px;height:1px;background:#b9713f"></div><div class="a" style="left:0px;top:20px;width:29px;height:18px;background:#c54a2b;border:1px solid #fff;border-right-color:#7b8ca1;border-bottom-color:#7b8ca1;box-shadow:inset 0 1px 0 #cc3f18"></div><div class="a" style="left:29px;top:20px;width:1px;height:19px;background:#b9713f"></div><div class="a" style="left:30px;top:20px;width:29px;height:18px;background:#c54a2b;border:1px solid #fff;border-right-color:#7b8ca1;border-bottom-color:#7b8ca1;box-shadow:inset 0 1px 0 #cc3f18"></div><div class="a" style="left:59px;top:20px;width:1px;height:19px;background:#b9713f"></div><div class="a" style="left:60px;top:20px;width:126px;height:18px;background:#c54a2b;border:1px solid #fff;border-right-color:#7b8ca1;border-bottom-color:#7b8ca1;box-shadow:inset 0 1px 0 #cc3f18"></div><div class="a" style="left:186px;top:20px;width:1px;height:19px;background:#b9713f"></div><div class="cb cbs" style="left:9px;top:23px"><svg width="9" height="9" viewBox="0 0 9 9"><path d="M1 3 H3.200 V5.600 L7 1 L8.300 2 L3.300 8 H1Z" fill="#1c1c1c"/></svg></div><div class="cb cbs" style="left:39px;top:23px"><svg width="9" height="9" viewBox="0 0 9 9"><path d="M1 3 H3.200 V5.600 L7 1 L8.300 2 L3.300 8 H1Z" fill="#1c1c1c"/></svg></div><div class="td" style="left:62px;top:20px;width:122px;color:#fff;padding-top:3px">A</div><div class="a" style="left:0;top:57px;width:248px;height:1px;background:#b9713f"></div><div class="a" style="left:0px;top:39px;width:29px;height:18px;background:#c54a2b;border:1px solid #fff;border-right-color:#7b8ca1;border-bottom-color:#7b8ca1;box-shadow:inset 0 1px 0 #cc3f18"></div><div class="a" style="left:29px;top:39px;width:1px;height:19px;background:#b9713f"></div><div class="a" style="left:30px;top:39px;width:29px;height:18px;background:#c54a2b;border:1px solid #fff;border-right-color:#7b8ca1;border-bottom-color:#7b8ca1;box-shadow:inset 0 1px 0 #cc3f18"></div><div class="a" style="left:59px;top:39px;width:1px;height:19px;background:#b9713f"></div><div class="a" style="left:60px;top:39px;width:126px;height:18px;background:#c54a2b;border:1px solid #fff;border-right-color:#7b8ca1;border-bottom-color:#7b8ca1;box-shadow:inset 0 1px 0 #cc3f18"></div><div class="a" style="left:186px;top:39px;width:1px;height:19px;background:#b9713f"></div><div class="cb cbs" style="left:9px;top:42px"><svg width="9" height="9" viewBox="0 0 9 9"><path d="M1 3 H3.200 V5.600 L7 1 L8.300 2 L3.300 8 H1Z" fill="#1c1c1c"/></svg></div><div class="cb cbs" style="left:39px;top:42px"><svg width="9" height="9" viewBox="0 0 9 9"><path d="M1 3 H3.200 V5.600 L7 1 L8.300 2 L3.300 8 H1Z" fill="#1c1c1c"/></svg></div><div class="td" style="left:62px;top:39px;width:122px;color:#fff;padding-top:3px;letter-spacing:-0.50px">TAX5</div><div class="td" style="left:187px;top:39px;width:65px;text-align:right;padding-top:3px;letter-spacing:0">2</div><div class="a" style="left:0;top:76px;width:248px;height:1px;background:#b9713f"></div><div class="a" style="left:0px;top:58px;width:29px;height:18px;background:#c54a2b;border:1px solid #fff;border-right-color:#7b8ca1;border-bottom-color:#7b8ca1;box-shadow:inset 0 1px 0 #cc3f18"></div><div class="a" style="left:29px;top:58px;width:1px;height:19px;background:#b9713f"></div><div class="a" style="left:30px;top:58px;width:29px;height:18px;background:#c54a2b;border:1px solid #fff;border-right-color:#7b8ca1;border-bottom-color:#7b8ca1;box-shadow:inset 0 1px 0 #cc3f18"></div><div class="a" style="left:59px;top:58px;width:1px;height:19px;background:#b9713f"></div><div class="a" style="left:60px;top:58px;width:126px;height:18px;background:#c54a2b;border:1px solid #fff;border-right-color:#7b8ca1;border-bottom-color:#7b8ca1;box-shadow:inset 0 1px 0 #cc3f18"></div><div class="a" style="left:186px;top:58px;width:1px;height:19px;background:#b9713f"></div><div class="cb cbs" style="left:9px;top:61px"><svg width="9" height="9" viewBox="0 0 9 9"><path d="M1 3 H3.200 V5.600 L7 1 L8.300 2 L3.300 8 H1Z" fill="#1c1c1c"/></svg></div><div class="cb cbs" style="left:39px;top:61px"><svg width="9" height="9" viewBox="0 0 9 9"><path d="M1 3 H3.200 V5.600 L7 1 L8.300 2 L3.300 8 H1Z" fill="#1c1c1c"/></svg></div><div class="td" style="left:62px;top:58px;width:122px;color:#fff;padding-top:3px;letter-spacing:-0.00px">TAXSCHEDULE#2</div><div class="td" style="left:187px;top:58px;width:65px;text-align:right;padding-top:3px;letter-spacing:0">6</div><div class="a" style="left:0;top:81px;width:248px;height:16px;background:#eee;border-top:1px solid #7b8ca1;border-bottom:1px solid #7b8ca1;box-shadow:inset 0 1px 0 #c5dbf3"></div>
<div class="a" style="left:0;top:97px;width:248px;height:1px;background:#b4cdec"></div>
<div class="a" style="left:0;top:81px;width:15px;height:16px;border:1px solid #7b8ca1;border-right:0;background:#eee;box-shadow:inset 1px 1px 0 #fff"></div>
<svg class="a" style="left:6px;top:86px" width="4" height="9" viewBox="0 0 4 9"><path d="M4 0 V9 L0 4.500Z" fill="#222"/></svg>
<div class="a" style="left:15px;top:81px;width:195px;height:16px;border:1px solid #ffc800;background:linear-gradient(#efc3a2,#e9a87c 60%,#e8a170);box-shadow:inset 0 0 0 1px #e8935f"></div>
<div class="a" style="left:111px;top:86px;width:5px;height:9px;background:linear-gradient(90deg,#f7e0cf 1px,transparent 1px) 0 0/2px 9px"></div><div class="a" style="left:110px;top:85px;width:5px;height:9px;background:linear-gradient(90deg,#8d86aa 1px,transparent 1px) 0 0/2px 9px"></div>
<div class="a" style="left:231px;top:81px;width:16px;height:16px;border:1px solid #7b8ca1;background:#eee;box-shadow:inset 1px 1px 0 #fff"></div>
<svg class="a" style="left:238px;top:86px" width="4" height="9" viewBox="0 0 4 9"><path d="M0 0 V9 L4 4.500Z" fill="#222"/></svg>
</div>
<div class="a" style="left:166px;top:236px;width:254px;height:25px;border:1px solid #d6d6d6"></div>
<div class="t" style="left:217px;top:243px;color:#000;letter-spacing:-0.01px">P - Printable &nbsp;&nbsp; A - Applicable</div>
<div class="t" style="left:165px;top:273px;letter-spacing:0.13px">Total Cost</div><div class="tf" style="left:244px;top:268px;width:80px;letter-spacing:0.19px">10.00</div>
<div class="t" style="left:165px;top:300px;letter-spacing:-0.00px">Profit (Margin)</div><div class="tf" style="left:244px;top:296px;width:80px;letter-spacing:0.18px">379 (97%)</div>
<div class="cb" style="left:329px;top:268px"><svg width="9" height="9" viewBox="0 0 9 9"><path d="M1 3 H3.200 V5.600 L7 1 L8.300 2 L3.300 8 H1Z" fill="#1c1c1c"/></svg></div><div class="t" style="left:346px;top:268px;letter-spacing:0.02px">Tax Applicable</div>
<div class="a" style="left:329px;top:284px;width:395px;height:36px;border:1px solid #b8b8b8"></div>
<div class="t" style="left:334px;top:296px;letter-spacing:-0.10px">Advance</div><div class="tf" style="left:381px;top:291px;width:75px;letter-spacing:0.16px">0.00</div>
<div class="t" style="left:464px;top:296px;letter-spacing:0.33px">Deposit</div><div class="tf" style="left:511px;top:291px;width:75px"></div>
<div class="t" style="left:594px;top:296px;letter-spacing:0.14px">Net Due</div><div class="tf" style="left:641px;top:291px;width:75px;letter-spacing:0.22px">533.03</div>
<div class="grp" style="left:443px;top:134px;width:190px;height:143px"><b>Damage &nbsp;Waiver</b></div>
<div class="t" style="left:456px;top:151px;letter-spacing:-0.17px">Type</div><div class="combo" style="left:528px;top:145px;width:101px;letter-spacing:0.16px">Percentage<i></i></div>
<div class="t" style="left:456px;top:180px;letter-spacing:0.09px">Percent</div><div class="tf tfw" style="left:528px;top:174px;width:101px;letter-spacing:0.16px">5.00</div>
<div class="t" style="left:456px;top:210px;letter-spacing:0.11px">Amount</div><div class="tf" style="left:528px;top:203px;width:101px;letter-spacing:0.19px">15.39</div>
<div class="cb" style="left:568px;top:260px"><svg width="9" height="9" viewBox="0 0 9 9"><path d="M1 3 H3.200 V5.600 L7 1 L8.300 2 L3.300 8 H1Z" fill="#1c1c1c"/></svg></div><div class="t" style="left:585px;top:260px;letter-spacing:0.04px">Taxable</div>
<div class="grp" style="left:648px;top:134px;width:190px;height:143px"><b>Service Charge</b></div>
<div class="t" style="left:661px;top:151px;letter-spacing:-0.17px">Type</div><div class="combo" style="left:733px;top:145px;width:101px;letter-spacing:0.16px">Percentage<i></i></div>
<div class="t" style="left:661px;top:180px;letter-spacing:0.09px">Percent</div><div class="tf tfw" style="left:733px;top:174px;width:101px;letter-spacing:0.16px">5.00</div>
<div class="t" style="left:661px;top:210px;letter-spacing:0.11px">Amount</div><div class="tf" style="left:733px;top:203px;width:101px;letter-spacing:0.19px">20.00</div>
<div class="cb" style="left:773px;top:260px"><svg width="9" height="9" viewBox="0 0 9 9"><path d="M1 3 H3.200 V5.600 L7 1 L8.300 2 L3.300 8 H1Z" fill="#1c1c1c"/></svg></div><div class="t" style="left:790px;top:260px;letter-spacing:0.04px">Taxable</div>
<div class="btn" style="left:655px;top:251px;width:23px;height:23px;padding-top:6px;letter-spacing:-0.33px">...</div>
<div class="grp" style="left:851px;top:134px;width:190px;height:143px"><b>Consumable</b></div>
<div class="t" style="left:864px;top:151px;letter-spacing:-0.17px">Type</div><div class="combo" style="left:936px;top:145px;width:101px;letter-spacing:0.16px">Percentage<i></i></div>
<div class="t" style="left:864px;top:180px;letter-spacing:0.09px">Percent</div><div class="tf tfw" style="left:936px;top:174px;width:101px;letter-spacing:0.16px">5.00</div>
<div class="t" style="left:864px;top:210px;letter-spacing:0.11px">Amount</div><div class="tf" style="left:936px;top:203px;width:101px;letter-spacing:0.19px">20.00</div>
<div class="cb" style="left:976px;top:260px"><svg width="9" height="9" viewBox="0 0 9 9"><path d="M1 3 H3.200 V5.600 L7 1 L8.300 2 L3.300 8 H1Z" fill="#1c1c1c"/></svg></div><div class="t" style="left:993px;top:260px;letter-spacing:0.04px">Taxable</div>
<div class="cb" style="left:727px;top:284px"></div><div class="t" style="left:744px;top:284px;letter-spacing:0.11px">Service Charge On Discounted Amount</div>
<div class="cb" style="left:727px;top:307px"></div><div class="t" style="left:744px;top:307px;letter-spacing:0.10px">Service Charge On Sell Items</div>
<div class="cb" style="left:976px;top:284px"></div><div class="t" style="left:993px;top:284px;letter-spacing:0.22px">Online</div>
<div class="btn" style="left:962px;top:299px;width:79px;height:23px;padding-top:5px;letter-spacing:0.22px">Re-Calculate</div>
<div class="pane" style="left:8px;top:356px;width:1169px;height:315px"><i style="left:0;top:0;width:1169px;height:1px;background:#5f83c4"></i><i style="left:1px;top:2px;width:1167px;height:2px;background:#c5dbf3"></i><i style="left:2px;top:4px;width:1163px;height:1px;background:#b2b2b2"></i><i style="left:0;top:0;width:1px;height:315px;background:#5f83c4"></i><i style="left:1px;top:2px;width:1px;height:312px;background:#c5dbf3"></i><i style="left:2px;top:4px;width:1px;height:307px;background:#b2b2b2"></i><i style="right:0;top:0;width:1px;height:315px;background:#7b8ca1"></i><i style="right:1px;top:2px;width:2px;height:312px;background:#c5dbf3"></i><i style="right:4px;top:4px;width:1px;height:307px;background:#b2b2b2"></i><i style="left:0;bottom:0;width:1169px;height:1px;background:#7b8ca1"></i><i style="left:1px;bottom:1px;width:1167px;height:2px;background:#c5dbf3"></i><i style="left:2px;bottom:4px;width:1163px;height:1px;background:#b2b2b2"></i></div>
<svg class="a" style="left:10px;top:334px" width="67" height="22" viewBox="0 0 67 22"><path d="M0.5 22 V6.5 L6.5 0.5 H66.5 V22" fill="#fd9a47" stroke="#7b8ca1"/><path d="M1.5 22 V7 L7 1.5 H66" fill="none" stroke="#fff" stroke-opacity=".85"/></svg><div class="t" style="left:16px;top:339px;color:#000;letter-spacing:0.24px;will-change:transform">Item(s)</div>
<svg class="a" style="left:76px;top:334px" width="59" height="22" viewBox="0 0 59 22"><path d="M0.5 22 V6.5 L6.5 0.5 H58.5 V22" fill="#c54a2b" stroke="#5f83c4"/><path d="M1.5 22 V7 L7 1.5 H58" fill="none" stroke="#fff" stroke-opacity=".85"/></svg><div class="a" style="left:77px;top:356px;width:57px;height:1px;background:#e4effb"></div><div class="t" style="left:82px;top:339px;color:#fff;font-weight:bold;letter-spacing:0;will-change:transform">Labor</div>
<div class="a" style="left:12px;top:362px;width:1159px;height:303px;border:1px solid #7b8ca1;background:#fff;overflow:hidden"><div class="a" style="left:0;top:0;width:1157px;height:20px;background:#ff6c3c"></div><div class="th" style="left:0px;top:0;width:14px">T</div><div class="th" style="left:15px;top:0;width:14px">C</div><div class="th" style="left:30px;top:0;width:14px">L</div><div class="th" style="left:45px;top:0;width:59px;letter-spacing:-0.06px">Action</div><div class="th" style="left:105px;top:0;width:111px;letter-spacing:0.12px">Labor Id</div><div class="th" style="left:217px;top:0;width:73px;letter-spacing:0.27px">Description</div><div class="th" style="left:291px;top:0;width:49px;letter-spacing:-0.56px">Qty</div><div class="th" style="left:341px;top:0;width:48px;letter-spacing:0.40px">Tasks</div><div class="th" style="left:390px;top:0;width:79px;letter-spacing:0.19px">Regular Rate</div><div class="th" style="left:470px;top:0;width:59px;letter-spacing:0.29px">Discount</div><div class="th" style="left:530px;top:0;width:59px;letter-spacing:-0.05px">OT Rate</div><div class="th" style="left:590px;top:0;width:59px;letter-spacing:0.05px">DT Rate</div><div class="th" style="left:650px;top:0;width:59px;letter-spacing:0.00px">RT</div><div class="th" style="left:710px;top:0;width:49px;letter-spacing:-0.33px">OT</div><div class="th" style="left:760px;top:0;width:49px;letter-spacing:0.00px">DT</div><div class="th" style="left:810px;top:0;width:59px;letter-spacing:0.21px">Net Disc</div><div class="th" style="left:870px;top:0;width:74px;letter-spacing:0.11px">Amount</div><div class="th" style="left:945px;top:0;width:74px;letter-spacing:0.18px">TotalCost</div><div class="th" style="left:1020px;top:0;width:119px;letter-spacing:-0.00px">Start Date</div><div class="th" style="left:1140px;top:0;width:21px"></div>
<div class="a" style="left:0;top:38px;width:1157px;height:1px;background:#b9713f"></div><div class="a" style="left:14px;top:20px;width:1px;height:19px;background:#b9713f"></div><div class="cb" style="left:1px;top:23px"><svg width="9" height="9" viewBox="0 0 9 9"><path d="M1 3 H3.200 V5.600 L7 1 L8.300 2 L3.300 8 H1Z" fill="#1c1c1c"/></svg></div><div class="a" style="left:29px;top:20px;width:1px;height:19px;background:#b9713f"></div><div class="cb" style="left:16px;top:23px"></div><div class="a" style="left:44px;top:20px;width:1px;height:19px;background:#b9713f"></div><div class="cb" style="left:31px;top:23px"></div><div class="a" style="left:104px;top:20px;width:1px;height:19px;background:#b9713f"></div><div class="td" style="left:46px;top:20px;width:58px;letter-spacing:0.16px">Rent</div><div class="a" style="left:216px;top:20px;width:1px;height:19px;background:#b9713f"></div><div class="a" style="left:290px;top:20px;width:1px;height:19px;background:#b9713f"></div><div class="td" style="left:218px;top:20px;width:72px;letter-spacing:0.02px">Audio Assi...</div><div class="a" style="left:340px;top:20px;width:1px;height:19px;background:#b9713f"></div><div class="td" style="left:291px;top:20px;width:49px;text-align:right;padding-right:1px">1</div><div class="a" style="left:389px;top:20px;width:1px;height:19px;background:#b9713f"></div><div class="a" style="left:469px;top:20px;width:1px;height:19px;background:#b9713f"></div><div class="td" style="left:390px;top:20px;width:79px;text-align:right;padding-right:1px;letter-spacing:0.22px">100.00</div><div class="a" style="left:529px;top:20px;width:1px;height:19px;background:#b9713f"></div><div class="td" style="left:470px;top:20px;width:58px;text-align:right;padding-right:1px;letter-spacing:0.19px">10.00</div><div class="a" style="left:589px;top:20px;width:1px;height:19px;background:#b9713f"></div><div class="a" style="left:649px;top:20px;width:1px;height:19px;background:#b9713f"></div><div class="a" style="left:709px;top:20px;width:1px;height:19px;background:#b9713f"></div><div class="td" style="left:650px;top:20px;width:59px;text-align:right;padding-right:1px;letter-spacing:0.16px">1.00</div><div class="a" style="left:759px;top:20px;width:1px;height:19px;background:#b9713f"></div><div class="a" style="left:809px;top:20px;width:1px;height:19px;background:#b9713f"></div><div class="a" style="left:869px;top:20px;width:1px;height:19px;background:#b9713f"></div><div class="td" style="left:810px;top:20px;width:59px;text-align:right;padding-right:1px;letter-spacing:0.19px">19.00</div><div class="a" style="left:944px;top:20px;width:1px;height:19px;background:#b9713f"></div><div class="td" style="left:870px;top:20px;width:74px;text-align:right;padding-right:1px;letter-spacing:0.19px">81.00</div><div class="a" style="left:1019px;top:20px;width:1px;height:19px;background:#b9713f"></div><div class="td" style="left:945px;top:20px;width:74px;text-align:right;padding-right:1px;letter-spacing:0.19px">10.00</div><div class="a" style="left:1139px;top:20px;width:1px;height:19px;background:#b9713f"></div><div class="a" style="left:1161px;top:20px;width:1px;height:19px;background:#b9713f"></div>
<div class="a" style="left:103px;top:19px;width:111px;height:24px;border:2px solid #c00000;background:#fff"></div><div class="a" style="left:105px;top:38px;width:107px;height:1px;background:#b9713f"></div><div class="td" style="left:106px;top:20px;width:105px;letter-spacing:-0.24px">AUDIOASSIST</div><div class="a" style="left:470px;top:20px;width:59px;height:18px;border:1px solid #f00"></div><div class="a" style="left:0;top:284px;width:1157px;height:16px;background:#eee;border-top:1px solid #7b8ca1;border-bottom:1px solid #7b8ca1;box-shadow:inset 0 1px 0 #c5dbf3"></div>
<div class="a" style="left:0;top:300px;width:1157px;height:1px;background:#b4cdec"></div>
<div class="a" style="left:0;top:284px;width:15px;height:16px;border:1px solid #7b8ca1;border-right:0;background:#eee;box-shadow:inset 1px 1px 0 #fff"></div>
<svg class="a" style="left:6px;top:289px" width="4" height="9" viewBox="0 0 4 9"><path d="M4 0 V9 L0 4.500Z" fill="#222"/></svg>
<div class="a" style="left:15px;top:284px;width:934px;height:16px;border:1px solid #ffc800;background:linear-gradient(#efc3a2,#e9a87c 60%,#e8a170);box-shadow:inset 0 0 0 1px #e8935f"></div>
<div class="a" style="left:480px;top:289px;width:5px;height:9px;background:linear-gradient(90deg,#f7e0cf 1px,transparent 1px) 0 0/2px 9px"></div><div class="a" style="left:479px;top:288px;width:5px;height:9px;background:linear-gradient(90deg,#8d86aa 1px,transparent 1px) 0 0/2px 9px"></div>
<div class="a" style="left:1140px;top:284px;width:16px;height:16px;border:1px solid #7b8ca1;background:#eee;box-shadow:inset 1px 1px 0 #fff"></div>
<svg class="a" style="left:1147px;top:289px" width="4" height="9" viewBox="0 0 4 9"><path d="M0 0 V9 L4 4.500Z" fill="#222"/></svg>
</div>
<div class="t b" style="left:70px;top:678px;font-size:14px;line-height:16px;height:16px;color:#1a1a1a">Items</div><div class="tf b" style="left:120px;top:673px;width:100px;font-size:14px;line-height:16px;padding-top:3px">307.80</div>
<div class="t b" style="left:235px;top:678px;font-size:14px;line-height:16px;height:16px;color:#1a1a1a">Labor</div><div class="tf b" style="left:287px;top:673px;width:100px;font-size:14px;line-height:16px;padding-top:3px">81.00</div>
<div class="t b" style="left:446px;top:678px;font-size:14px;line-height:16px;height:16px;color:#1a1a1a">Sub Total</div><div class="tf b" style="left:525px;top:673px;width:100px;font-size:14px;line-height:16px;padding-top:3px">444.19</div>
<div class="t b" style="left:636px;top:678px;font-size:14px;line-height:16px;height:16px;color:#1a1a1a">Tax</div><div class="tf b" style="left:670px;top:673px;width:100px;font-size:14px;line-height:16px;padding-top:3px">88.84</div>
<div class="btn b" style="left:813px;top:673px;width:89px;height:23px;font-size:14px;line-height:16px;padding-top:4px;color:#1a1a1a">Total</div><div class="tf b" style="left:906px;top:673px;width:100px;font-size:14px;line-height:16px;padding-top:3px">533.03</div>
<div class="a" style="left:8px;top:707px;width:1169px;height:25px;border:1px solid #fff;border-top-color:#c4c8cc;border-left-color:#c4c8cc;background:#fff;box-shadow:inset 1px 1px 0 #808080,inset -1px -1px 0 #c2c2c2"></div>
</body></html>
